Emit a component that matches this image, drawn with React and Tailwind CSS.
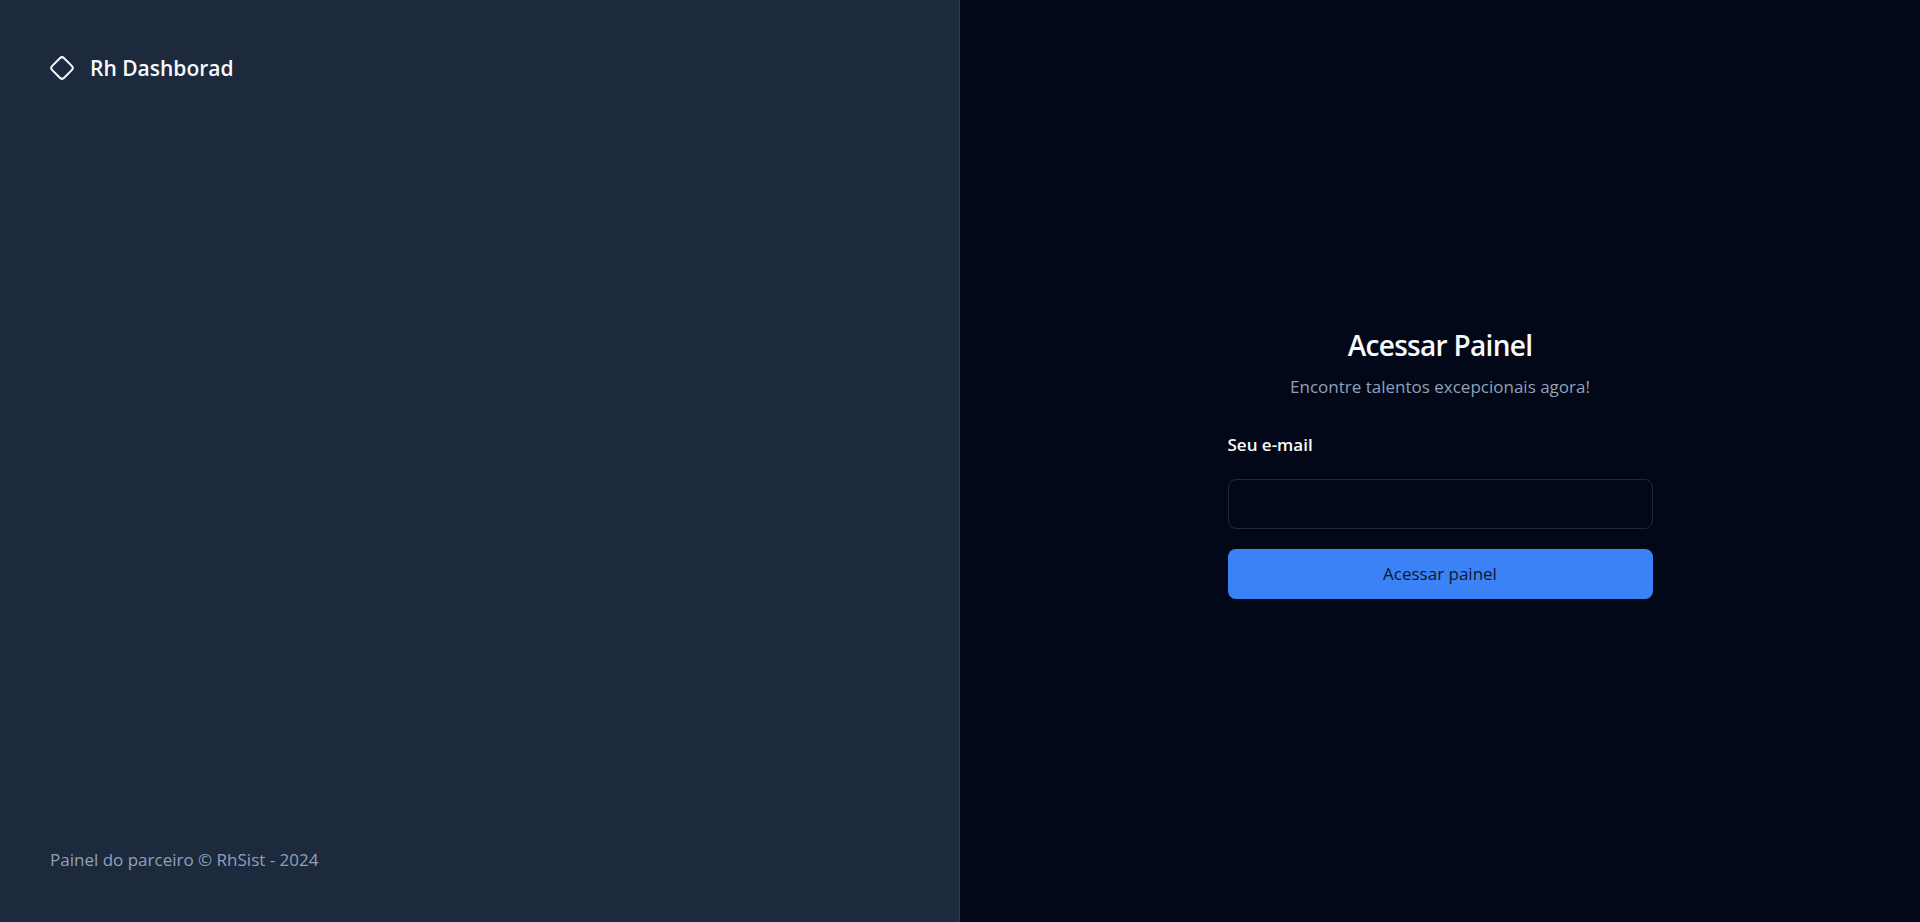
export default function App() {
  return (
    <div className="grid min-h-screen grid-cols-2 bg-[#020817] font-['Segoe_UI','Open_Sans','Noto_Sans',sans-serif] text-slate-50">
      <Sidebar />
      <main className="flex flex-col items-center justify-center">
        <AuthForm />
      </main>
    </div>
  );
}

function Sidebar() {
  return (
    <aside className="flex flex-col justify-between border-r border-[#2d3a4d] bg-slate-800 p-[50px]">
      <div className="flex items-center gap-4 text-[21px] leading-9 font-semibold">
        <DiamondIcon />
        <span>Rh Dashborad</span>
      </div>
      <footer className="text-[17px] leading-6 text-slate-400">
        Painel do parceiro &copy; RhSist - 2024
      </footer>
    </aside>
  );
}

function AuthForm() {
  return (
    <div className="flex w-full max-w-[425px] flex-col gap-7">
      <div className="flex flex-col gap-2 text-center">
        <h1 className="text-[28px] leading-11 font-semibold tracking-tight">
          Acessar Painel
        </h1>
        <p className="text-[17px] leading-6 text-slate-400">
          Encontre talentos excepcionais agora!
        </p>
      </div>

      <form className="flex flex-col gap-5">
        <div className="flex flex-col gap-4">
          <label
            htmlFor="email"
            className="text-[17px] leading-9 font-semibold"
          >
            Seu e-mail
          </label>
          <input
            id="email"
            type="email"
            className="h-[50px] rounded-lg border border-slate-800 bg-transparent px-4 text-[17px] outline-none"
          />
        </div>
        <button
          type="submit"
          className="h-[50px] rounded-lg bg-[#3b82f6] text-[17px] font-medium text-slate-900"
        >
          Acessar painel
        </button>
      </form>
    </div>
  );
}

function DiamondIcon() {
  return (
    <svg
      viewBox="0 0 24 24"
      className="size-6"
      fill="none"
      stroke="currentColor"
      strokeWidth="2"
      aria-hidden="true"
    >
      <rect
        x="3.6"
        y="3.6"
        width="16.8"
        height="16.8"
        rx="3"
        transform="rotate(45 12 12)"
      />
    </svg>
  );
}
